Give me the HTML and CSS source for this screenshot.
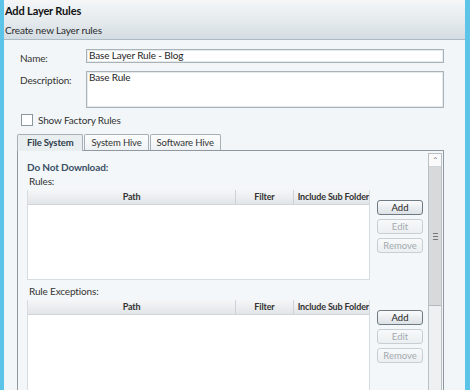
FILE: index.html
```html
<!DOCTYPE html>
<html lang="en">
<head>
  <meta charset="UTF-8">
  <title>Add Layer Rules</title>
  <link rel="stylesheet" href="styles.css">
</head>
<body>
  <div class="window">
    <div class="header">
      <div class="title">Add Layer Rules</div>
      <div class="subtitle">Create new Layer rules</div>
    </div>

    <div class="form">
      <div class="field">
        <label>Name:</label>
        <div class="input">Base Layer Rule - Blog</div>
      </div>
      <div class="field">
        <label>Description:</label>
        <div class="input textarea">Base Rule</div>
      </div>
      <div class="check">
        <span class="box"></span> Show Factory Rules
      </div>
    </div>

    <div class="tabs">
      <div class="tab active">File System</div>
      <div class="tab">System Hive</div>
      <div class="tab">Software Hive</div>
    </div>

    <div class="panel">
      <div class="panel-body">
        <div class="section-title">Do Not Download:</div>
        <div class="sub-label">Rules:</div>
        <div class="rule-block">
          <div class="grid">
            <div class="grid-head">
              <div class="col path">Path</div>
              <div class="col filter">Filter</div>
              <div class="col sub">Include Sub Folder</div>
            </div>
            <div class="grid-rows"></div>
          </div>
          <div class="buttons">
            <button class="btn">Add</button>
            <button class="btn" disabled>Edit</button>
            <button class="btn" disabled>Remove</button>
          </div>
        </div>

        <div class="sub-label exceptions">Rule Exceptions:</div>
        <div class="rule-block">
          <div class="grid">
            <div class="grid-head">
              <div class="col path">Path</div>
              <div class="col filter">Filter</div>
              <div class="col sub">Include Sub Folder</div>
            </div>
            <div class="grid-rows tall"></div>
          </div>
          <div class="buttons">
            <button class="btn">Add</button>
            <button class="btn" disabled>Edit</button>
            <button class="btn" disabled>Remove</button>
          </div>
        </div>
      </div>

      <div class="scrollbar">
        <div class="arrow">&#8963;</div>
        <div class="thumb"><span class="grip"></span></div>
      </div>
    </div>
  </div>
</body>
</html>
```

FILE: styles.css
```css
body {
  margin: 0;
  padding: 0;
  font-family: 'Lato', 'Noto Sans', sans-serif;
  font-size: 10px;
  letter-spacing: -0.15px;
  color: #1e1e1e;
  background: #5cc4e8;
  width: 470px;
  height: 390px;
  overflow: hidden;
}
.window {
  margin: 0 5px 0 4px;
  height: 390px;
  background: #f2f6f8;
  overflow: hidden;
}
.header {
  height: 39px;
  border-bottom: 1px solid #aebac2;
  background: linear-gradient(to bottom, #f4f6f8, #e6ebee 50%, #d4dde3);
}
.title {
  height: 21px;
  line-height: 22px;
  padding-left: 1px;
  font-size: 11px;
  font-weight: bold;
  color: #111;
}
.subtitle {
  line-height: 18px;
  padding-left: 1px;
  color: #2a2a2a;
}
.form {
  padding: 9px 0 0 16px;
}
.field {
  display: flex;
  margin-bottom: 7px;
}
.field label {
  width: 66px;
  padding-top: 3px;
  color: #333;
}
.input {
  width: 352px;
  height: 12px;
  line-height: 11px;
  padding: 0 2px;
  background: #fff;
  border: 1px solid #a9b3b9;
  box-shadow: inset 0 0 0 1px #e4e9ec;
}
.textarea {
  height: 35px;
}
.check {
  display: flex;
  align-items: center;
  gap: 5px;
  margin-top: -1px;
  padding-left: 1px;
  line-height: 12px;
  color: #333;
}
.box {
  width: 10px;
  height: 10px;
  background: #fff;
  border: 1px solid #8c969c;
}
.tabs {
  display: flex;
  margin: 8px 0 0 13px;
  height: 16px;
  position: relative;
  z-index: 1;
}
.tab {
  height: 15px;
  line-height: 15px;
  padding: 0 6px;
  margin-right: 1px;
  font-size: 9.5px;
  border: 1px solid #a7b0b6;
  border-bottom: none;
  border-radius: 2px 2px 0 0;
  background: linear-gradient(to bottom, #fdfdfe, #eef2f4);
  color: #333;
}
.tab.active {
  font-weight: bold;
  padding: 0 9px;
  height: 16px;
  background: #e9eef1;
  color: #2e3d4a;
}
.panel {
  display: flex;
  margin-left: 13px;
  width: 425px;
  height: 260px;
  border: 1px solid #8e989e;
  background: #f4f7f9;
}
.panel-body {
  flex: 1;
  padding: 10px 0 0 9px;
}
.section-title {
  font-weight: bold;
  color: #3a4f66;
  line-height: 12px;
}
.sub-label {
  margin: 2px 0 0 2px;
  line-height: 12px;
  color: #333;
}
.sub-label.exceptions {
  margin-top: 5px;
}
.rule-block {
  display: flex;
  gap: 7px;
  margin-top: 3px;
}
.grid {
  width: 341px;
  border: 1px solid #d6dcdf;
  border-top: none;
  background: #fff;
}
.grid-head {
  display: flex;
  height: 14px;
  line-height: 14px;
  font-weight: bold;
  font-size: 9px;
  color: #333;
  background: linear-gradient(to bottom, #f5f6f7, #e2e5e8);
  border-bottom: 1px solid #cfd4d8;
  white-space: nowrap;
  overflow: hidden;
}
.col {
  text-align: center;
  border-right: 1px solid #cdd2d6;
}
.col.path { width: 209px; }
.col.filter { width: 57px; }
.col.sub {
  flex: 1;
  border-right: none;
  text-align: left;
  padding-left: 4px;
}
.grid-rows {
  height: 74px;
}
.grid-rows.tall {
  height: 120px;
}
.buttons {
  display: flex;
  flex-direction: column;
  gap: 4px;
  padding-top: 10px;
}
.btn {
  width: 46px;
  height: 15px;
  padding: 0;
  font-family: inherit;
  font-size: 9.5px;
  line-height: 12px;
  color: #222;
  background: linear-gradient(to bottom, #fafbfc, #dde2e6);
  border: 1px solid #6f7a82;
  border-radius: 3px;
}
.btn:disabled {
  color: #a4abb0;
  border-color: #c8cfd3;
  background: linear-gradient(to bottom, #f7f9fa, #eceff1);
}
.scrollbar {
  width: 12px;
  margin: 2px 1px 0 0;
  border: 1px solid #b9c0c4;
  border-bottom: none;
  background: #eef0f1;
  display: flex;
  flex-direction: column;
}
.arrow {
  height: 12px;
  font-size: 8px;
  line-height: 13px;
  text-align: center;
  color: #777;
  background: #fafafa;
  border-bottom: 1px solid #cfd4d7;
}
.thumb {
  height: 138px;
  background: #d7d9db;
  border-bottom: 1px solid #b5b9bc;
  display: flex;
  align-items: center;
  justify-content: center;
}
.grip {
  width: 5px;
  height: 5px;
  border-top: 1px solid #777;
  border-bottom: 1px solid #777;
  background: linear-gradient(to bottom, transparent 2px, #777 2px, #777 3px, transparent 3px);
}
```
